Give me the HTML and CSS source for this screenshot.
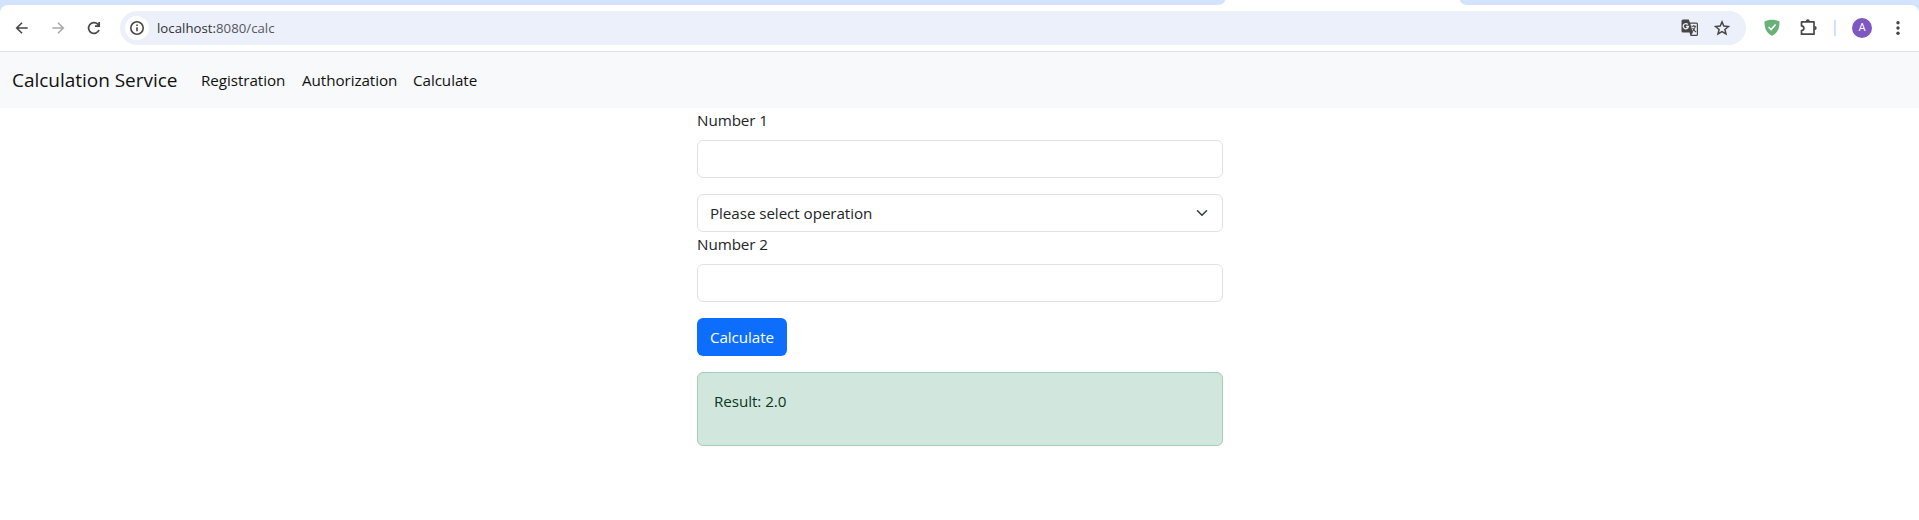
FILE: index.html
```html
<!DOCTYPE html>
<html lang="en">
<head>
<meta charset="utf-8">
<title>Calculation Service</title>
<link rel="stylesheet" href="styles.css">
</head>
<body>
<div class="browser">
<div class="tabstrip">
  <div class="strip strip-left"></div>
  <div class="strip strip-right"></div>
</div>
<div class="toolbar">
  <svg class="icon back" viewBox="0 0 20 20"><path d="M15.7 10H5M10 4.7 4.700 10l5.300 5.300"/></svg>
  <svg class="icon forward" viewBox="0 0 20 20"><path d="M4.300 10H15M10 4.700l5.300 5.300-5.300 5.300"/></svg>
  <svg class="icon reload" viewBox="0 0 20 20"><path d="M15 12a5.400 5.400 0 1 1-1.200-5.800L15.200 8M15.200 4v4.200H11"/></svg>
  <div class="omnibox">
    <span class="site-info"><svg class="icon" viewBox="0 0 20 20"><circle cx="10" cy="10" r="6.200"/><path d="M10 9.200v4M10 6.400v1.500"/></svg></span>
    <span class="url"><span class="host">localhost:</span>8080/calc</span>
    <svg class="icon translate" viewBox="0 0 20 20"><path class="solid" d="M3 1.500h5.800l1.100 3H16.500A1.500 1.500 0 0 1 18 6v10.500a1.500 1.500 0 0 1-1.500 1.500H10.500l-1-3.500H3A1.500 1.500 0 0 1 1.500 13V3A1.500 1.500 0 0 1 3 1.500z"/><path class="paper" d="M10.300 5.700h6.500v11.100h-5.400l1.500-2.200z"/><path class="g" d="M7.800 6.500A2.600 2.600 0 1 0 8.400 8.500H6"/><path class="glyph" d="M11.400 8.300H16.200M13.800 7v1.300M15.300 8.500c-.5 2.200-1.600 3.900-3.100 5.100M12.600 9.900c.8 1.700 1.900 2.900 3.600 4.200"/></svg>
    <svg class="icon star" viewBox="0 0 20 20"><path d="m10 3.900 1.800 4.200 4.600.4-3.500 3 1.100 4.500-4-2.400L6 16l1.100-4.500-3.500-3 4.600-.4z"/></svg>
  </div>
  <svg class="icon shield" viewBox="0 0 20 20"><path class="body" d="M10 1.800c2.600 0 5.200.5 7.500 1.600 0 6-.9 10.700-7.500 14.300C3.400 14.100 2.500 9.400 2.500 3.400 4.800 2.300 7.400 1.800 10 1.800z"/><path class="check" d="m6.600 9 2.500 2.500 4.500-5"/></svg>
  <svg class="icon puzzle" viewBox="0 0 20 20"><path d="M3.500 3.900H16v12.300H3.500v-3.600c3.200-.4 3.200-4.300 0-4.700z"/><path class="solid" d="M7.800 3.300a2 2 0 0 1 4 0zM16.600 8a2.100 2.100 0 0 1 0 4.200z"/></svg>
  <span class="divider"></span>
  <span class="avatar">A</span>
  <svg class="icon menu" viewBox="0 0 20 20"><circle cx="10" cy="4.700" r="1.700"/><circle cx="10" cy="10" r="1.700"/><circle cx="10" cy="15.300" r="1.700"/></svg>
</div>
</div>
<nav class="navbar">
  <a class="brand">Calculation Service</a>
  <a class="link registration">Registration</a>
  <a class="link authorization">Authorization</a>
  <a class="link">Calculate</a>
</nav>
<main class="form">
  <label class="label" for="n1">Number 1</label>
  <input class="control" id="n1" type="text">
  <div class="control select"><span class="select-text">Please select operation</span><svg class="chevron" viewBox="0 0 16 16"><path d="m2 5 6 6 6-6"/></svg></div>
  <label class="label" for="n2">Number 2</label>
  <input class="control" id="n2" type="text">
  <button class="button" type="button"><span class="button-text">Calculate</span></button>
  <div class="alert"><p class="result">Result: 2.0</p></div>
</main>
</body>
</html>
```
FILE: styles.css
```css
* { box-sizing: border-box; }
body {
  margin: 0;
  background: #fff;
  color: #212529;
  font: 15.2px/24px "Open Sans", "Noto Sans", sans-serif;
  letter-spacing: -0.06px;
}
.browser { background: #d3e3fd; }
.tabstrip {
  display: flex;
  justify-content: space-between;
  height: 5px;
  background: #fff;
}
.strip { background: #d3e3fd; height: 5px; }
.strip-left { width: 1225px; border-bottom-right-radius: 10px 7px; }
.strip-right { width: 459px; border-bottom-left-radius: 10px 7px; }
.toolbar {
  display: flex;
  align-items: center;
  height: 47px;
  padding: 0 11px 1px 12px;
  border-radius: 8px 8px 0 0;
  background: linear-gradient(#dedfe0, #dedfe0) bottom / 100% 1px no-repeat #fff;
}
.icon {
  display: block;
  flex: none;
  width: 20px;
  height: 20px;
  fill: none;
  stroke: #474747;
  stroke-width: 1.6;
}
.forward { margin-left: 16px; stroke: #ababab; }
.reload { margin-left: 16px; stroke-width: 1.7; }
.omnibox {
  display: flex;
  align-items: center;
  width: 1626px;
  height: 34px;
  margin-left: 16px;
  padding: 0 14px 0 5px;
  border-radius: 17px;
  background: #ecf0fa;
}
.site-info {
  display: grid;
  place-items: center;
  width: 24px;
  height: 24px;
  border-radius: 50%;
  background: #fff;
}
.url {
  margin-left: 8px;
  font-size: 13.2px;
  line-height: 20px;
  letter-spacing: 0.03px;
  color: #55585d;
}
.host { color: #303236; }
.translate { margin-left: auto; stroke: none; }
.solid { fill: #474747; stroke: none; }
.translate .paper { fill: #ecf0fa; }
.translate .g { stroke: #ecf0fa; stroke-width: 1.3; }
.translate .glyph { stroke: #474747; stroke-width: 1.1; }
.star { margin-left: 12px; stroke-width: 1.5; }
.shield { margin-left: 16px; stroke: none; }
.shield .body { fill: #67b279; }
.shield .check { stroke: #fff; stroke-width: 1.6; }
.puzzle { margin-left: 16px; stroke-width: 1.7; stroke-linejoin: round; }
.divider {
  width: 2px;
  height: 16px;
  margin-left: 16px;
  background: #d3e3fd;
}
.avatar {
  width: 20px;
  height: 20px;
  margin-left: 16px;
  border-radius: 50%;
  background: #7e57c2;
  color: #fff;
  font: 11px/20px Roboto, sans-serif;
  text-align: center;
}
.menu { margin-left: 16px; fill: #474747; stroke: none; }
.navbar {
  display: flex;
  align-items: center;
  height: 56px;
  padding: 0 12px;
  background: #f8f9fa;
  color: #111;
}
.brand {
  width: 181px;
  font-size: 19px;
  line-height: 30px;
  letter-spacing: -0.03px;
  white-space: nowrap;
}
.link { padding-left: 8px; color: #111; }
.registration { width: 101px; }
.authorization { width: 111px; }
.form {
  display: flex;
  flex-direction: column;
  width: 526px;
  margin-left: 697px;
}
.label { height: 24px; margin-bottom: 8px; }
.control {
  width: 100%;
  height: 38px;
  margin: 0 0 16px;
  border: 1px solid #dee2e6;
  border-radius: 6px;
  background: #fff;
}
.select {
  display: flex;
  align-items: center;
  justify-content: space-between;
  margin-bottom: 0;
  padding: 0 12px;
}
.chevron {
  width: 16px;
  height: 12px;
  fill: none;
  stroke: #343a40;
  stroke-width: 2;
  stroke-linecap: round;
  stroke-linejoin: round;
}
.button {
  align-self: flex-start;
  width: 90px;
  height: 38px;
  margin: 0 0 16px;
  padding: 0;
  border: 0;
  border-radius: 6px;
  background: #0d6efd;
  color: #fff;
  font: inherit;
  letter-spacing: inherit;
}
.alert {
  height: 74px;
  padding: 16px;
  border: 1px solid #a3cfbb;
  border-radius: 6px;
  background: #d1e7dd;
  color: #0a3622;
}
.result { margin: 0; }
```
